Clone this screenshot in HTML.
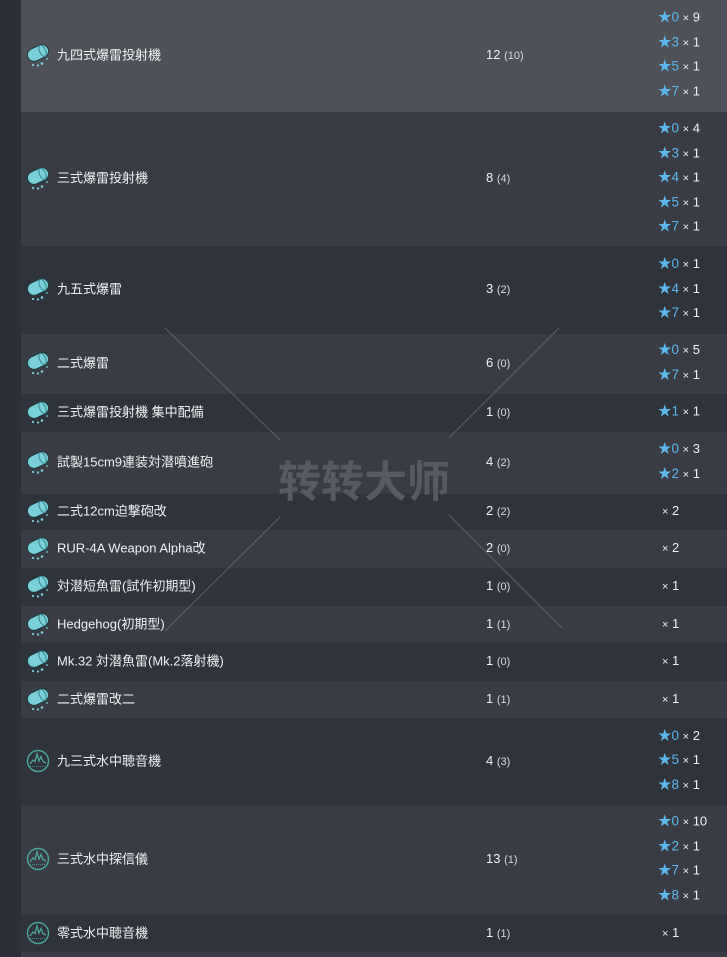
<!DOCTYPE html>
<html><head><meta charset="utf-8"><style>
*{margin:0;padding:0;box-sizing:border-box}
body{width:727px;height:957px;background:#2b2f37;position:relative;overflow:hidden;font-family:"Liberation Sans","Noto Sans CJK JP",sans-serif;font-size:13px;color:#eef0f2}
.r{position:absolute;left:21px;right:0;}
.L{background:#3a3c45}.D{background:#2f333c}.H{background:#4f5159}
.ic{position:absolute;left:5px;top:50%;margin-top:-13px;width:26px;height:24px;overflow:visible}
.nm{position:absolute;left:36px;top:50%;transform:translateY(-60%);white-space:nowrap}
.ct{position:absolute;left:465px;top:50%;transform:translateY(-60%);white-space:nowrap}
.ct small{font-size:11px;color:#d8dadd}
.st{position:absolute;left:637px;top:50%;transform:translateY(calc(-50% - 1.5px));white-space:nowrap}
.st div{height:24.5px;line-height:24.5px;font-size:13px}
.st b{font-weight:normal;color:#5bb8ec;font-size:13.5px}
.x{font-size:11px}
.one{position:absolute;left:641px;top:50%;transform:translateY(-60%)}
.wm{position:absolute;left:278px;top:449px;font-size:43px;font-weight:bold;color:#585a61;font-family:"Noto Sans CJK SC",sans-serif;line-height:60px}
</style></head><body>
<svg width="0" height="0" style="position:absolute"><defs>
<g id="dc"><g transform="rotate(-25 12 10)"><rect x="1" y="3.5" width="22" height="13" rx="6.5" fill="#7ad0da" stroke="#1e3a40" stroke-width="1"/><ellipse cx="17" cy="10" rx="3" ry="6" fill="none" stroke="#3d8a95" stroke-width="1.1"/></g><circle cx="7" cy="22" r="1.1" fill="#7ad0da"/><circle cx="12" cy="22.5" r="1.1" fill="#7ad0da"/><circle cx="16" cy="20.5" r="1.3" fill="#7ad0da"/><circle cx="21" cy="16" r="0.9" fill="#7ad0da"/></g>
<g id="so"><circle cx="12" cy="12" r="10.5" fill="none" stroke="#4aa89c" stroke-width="1.4"/><path d="M4 15 L7 11 L9 12.5 L11 5 L13 12 L15 7.5 L17 12.5 L20 14" fill="none" stroke="#4aa89c" stroke-width="1.3"/><path d="M4 17.5 H20" stroke="#4aa89c" stroke-width="0.8" stroke-dasharray="1 1"/></g>
</defs></svg>

<div class="r H" style="top:0;height:112px"><svg class="ic"><use href="#dc"/></svg><span class="nm">九四式爆雷投射機</span><span class="ct">12 <small>(10)</small></span><div class="st"><div><b>★0</b> <span class="x">×</span> 9</div><div><b>★3</b> <span class="x">×</span> 1</div><div><b>★5</b> <span class="x">×</span> 1</div><div><b>★7</b> <span class="x">×</span> 1</div></div></div>
<div class="r L" style="top:112px;height:134px"><svg class="ic"><use href="#dc"/></svg><span class="nm">三式爆雷投射機</span><span class="ct">8 <small>(4)</small></span><div class="st"><div><b>★0</b> <span class="x">×</span> 4</div><div><b>★3</b> <span class="x">×</span> 1</div><div><b>★4</b> <span class="x">×</span> 1</div><div><b>★5</b> <span class="x">×</span> 1</div><div><b>★7</b> <span class="x">×</span> 1</div></div></div>
<div class="r D" style="top:246px;height:88px"><svg class="ic"><use href="#dc"/></svg><span class="nm">九五式爆雷</span><span class="ct">3 <small>(2)</small></span><div class="st"><div><b>★0</b> <span class="x">×</span> 1</div><div><b>★4</b> <span class="x">×</span> 1</div><div><b>★7</b> <span class="x">×</span> 1</div></div></div>
<div class="r L" style="top:334px;height:60px"><svg class="ic"><use href="#dc"/></svg><span class="nm">二式爆雷</span><span class="ct">6 <small>(0)</small></span><div class="st"><div><b>★0</b> <span class="x">×</span> 5</div><div><b>★7</b> <span class="x">×</span> 1</div></div></div>
<div class="r D" style="top:394px;height:38px"><svg class="ic"><use href="#dc"/></svg><span class="nm">三式爆雷投射機 集中配備</span><span class="ct">1 <small>(0)</small></span><div class="st"><div><b>★1</b> <span class="x">×</span> 1</div></div></div>
<div class="r L" style="top:432px;height:62px"><svg class="ic"><use href="#dc"/></svg><span class="nm">試製15cm9連装対潜噴進砲</span><span class="ct">4 <small>(2)</small></span><div class="st"><div><b>★0</b> <span class="x">×</span> 3</div><div><b>★2</b> <span class="x">×</span> 1</div></div></div>
<div class="r D" style="top:494px;height:36px"><svg class="ic"><use href="#dc"/></svg><span class="nm">二式12cm迫撃砲改</span><span class="ct">2 <small>(2)</small></span><span class="one"><span class="x">×</span> 2</span></div>
<div class="r L" style="top:530px;height:38px"><svg class="ic"><use href="#dc"/></svg><span class="nm">RUR-4A Weapon Alpha改</span><span class="ct">2 <small>(0)</small></span><span class="one"><span class="x">×</span> 2</span></div>
<div class="r D" style="top:568px;height:38px"><svg class="ic"><use href="#dc"/></svg><span class="nm">対潜短魚雷(試作初期型)</span><span class="ct">1 <small>(0)</small></span><span class="one"><span class="x">×</span> 1</span></div>
<div class="r L" style="top:606px;height:37px"><svg class="ic"><use href="#dc"/></svg><span class="nm">Hedgehog(初期型)</span><span class="ct">1 <small>(1)</small></span><span class="one"><span class="x">×</span> 1</span></div>
<div class="r D" style="top:643px;height:38px"><svg class="ic"><use href="#dc"/></svg><span class="nm">Mk.32 対潜魚雷(Mk.2落射機)</span><span class="ct">1 <small>(0)</small></span><span class="one"><span class="x">×</span> 1</span></div>
<div class="r L" style="top:681px;height:37px"><svg class="ic"><use href="#dc"/></svg><span class="nm">二式爆雷改二</span><span class="ct">1 <small>(1)</small></span><span class="one"><span class="x">×</span> 1</span></div>
<div class="r D" style="top:718px;height:87px"><svg class="ic"><use href="#so"/></svg><span class="nm">九三式水中聴音機</span><span class="ct">4 <small>(3)</small></span><div class="st"><div><b>★0</b> <span class="x">×</span> 2</div><div><b>★5</b> <span class="x">×</span> 1</div><div><b>★8</b> <span class="x">×</span> 1</div></div></div>
<div class="r L" style="top:805px;height:110px"><svg class="ic"><use href="#so"/></svg><span class="nm">三式水中探信儀</span><span class="ct">13 <small>(1)</small></span><div class="st"><div><b>★0</b> <span class="x">×</span> 10</div><div><b>★2</b> <span class="x">×</span> 1</div><div><b>★7</b> <span class="x">×</span> 1</div><div><b>★8</b> <span class="x">×</span> 1</div></div></div>
<div class="r D" style="top:915px;height:37px"><svg class="ic"><use href="#so"/></svg><span class="nm">零式水中聴音機</span><span class="ct">1 <small>(1)</small></span><span class="one"><span class="x">×</span> 1</span></div>
<div class="r L" style="top:952px;height:5px"></div>

<svg style="position:absolute;left:0;top:0" width="727" height="957"><g stroke="#6a6c72" stroke-width="1" opacity="0.8"><line x1="165" y1="328" x2="280" y2="440"/><line x1="559" y1="328" x2="449" y2="438"/><line x1="280" y1="517" x2="165" y2="631"/><line x1="449" y1="515" x2="562" y2="628"/></g></svg>
<div class="wm">转转大师</div>
</body></html>
